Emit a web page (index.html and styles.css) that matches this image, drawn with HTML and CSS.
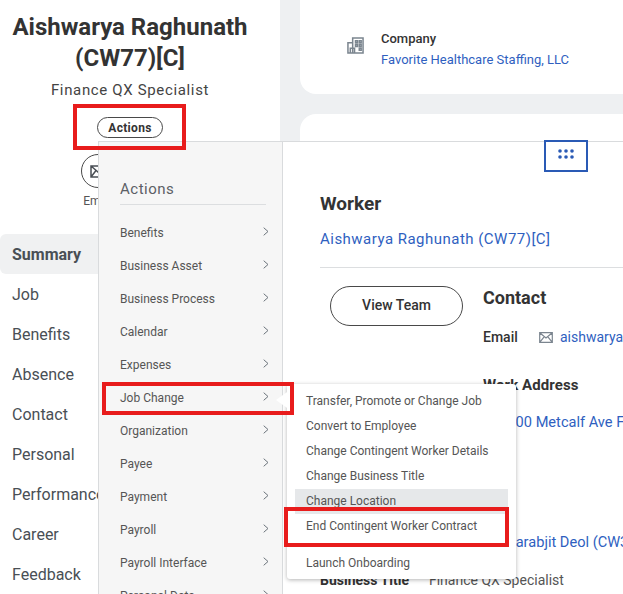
FILE: index.html
```html
<!DOCTYPE html>
<html lang="en">
<head>
    <meta charset="utf-8">
    <title>Worker profile</title>
    <link rel="stylesheet" href="styles.css">
</head>
<body>
    <svg class="sprites" width="0" height="0">
        <symbol id="chev" viewBox="0 0 6 9"><path d="M.7.700L5 4.500.7 8.300" fill="none" stroke="#6b737b" stroke-width="1"/></symbol>
    </svg>
    <div class="page">
        <!-- profile column -->
        <aside class="side">
            <h1 class="name">Aishwarya Raghunath (CW77)[C]</h1>
            <p class="role">Finance QX Specialist</p>
            <button class="btn-actions">Actions</button>
            <div class="quick">
                <span class="quick-icon">
                    <svg width="16" height="13" viewBox="0 0 16 13"><path d="M1 1h14v11H1zM1 1l7 6 7-6M1 12l5-6.500M15 12l-5-6.500" fill="none" stroke="#4a4f55" stroke-width="1.500"/></svg>
                </span>
                <span class="quick-label">Email</span>
            </div>
            <nav class="nav">
                <a class="nav-item nav-active">Summary</a>
                <a class="nav-item">Job</a>
                <a class="nav-item">Benefits</a>
                <a class="nav-item">Absence</a>
                <a class="nav-item">Contact</a>
                <a class="nav-item">Personal</a>
                <a class="nav-item">Performance</a>
                <a class="nav-item">Career</a>
                <a class="nav-item">Feedback</a>
            </nav>
        </aside>

        <main class="content">
            <section class="card card-top">
                <svg class="company-icon" width="17" height="17" viewBox="0 0 18 18"><path d="M6 1h11v16H1V6h5zM6 6v11M3.500 17v-5h4.500v5M9 4h2v2H9zM13 4h2v2h-2zM13 8h2v2h-2zM13 12h2v2h-2zM9 8h2v2H9z" fill="none" stroke="#7b858f" stroke-width="1.600"/></svg>
                <div>
                    <div class="company-label">Company</div>
                    <a class="link company-link">Favorite Healthcare Staffing, LLC</a>
                </div>
            </section>
            <section class="card card-bottom"></section>
        </main>
    </div>

    <!-- actions popup -->
    <div class="popup">
        <div class="menu">
            <div class="menu-title">Actions</div>
            <ul class="menu-list">
                <li>Benefits<svg class="chev"><use href="#chev"/></svg></li>
                <li>Business Asset<svg class="chev"><use href="#chev"/></svg></li>
                <li>Business Process<svg class="chev"><use href="#chev"/></svg></li>
                <li>Calendar<svg class="chev"><use href="#chev"/></svg></li>
                <li>Expenses<svg class="chev"><use href="#chev"/></svg></li>
                <li>Job Change<svg class="chev"><use href="#chev"/></svg></li>
                <li>Organization<svg class="chev"><use href="#chev"/></svg></li>
                <li>Payee<svg class="chev"><use href="#chev"/></svg></li>
                <li>Payment<svg class="chev"><use href="#chev"/></svg></li>
                <li>Payroll<svg class="chev"><use href="#chev"/></svg></li>
                <li>Payroll Interface<svg class="chev"><use href="#chev"/></svg></li>
                <li>Personal Data<svg class="chev"><use href="#chev"/></svg></li>
            </ul>
        </div>
        <div class="worker">
            <div class="grid-btn">
                <svg width="16" height="10" viewBox="0 0 16 10" fill="#2a5ab5">
                    <circle cx="2" cy="2" r="1.800"/><circle cx="8" cy="2" r="1.800"/><circle cx="14" cy="2" r="1.800"/>
                    <circle cx="2" cy="8" r="1.800"/><circle cx="8" cy="8" r="1.800"/><circle cx="14" cy="8" r="1.800"/>
                </svg>
            </div>
            <h2 class="worker-title">Worker</h2>
            <a class="link worker-link">Aishwarya Raghunath (CW77)[C]</a>
            <hr class="worker-line">
            <div class="worker-body">
                <button class="btn-team">View Team</button>
                <div class="contact">
                    <h3 class="contact-title">Contact</h3>
                    <div class="email-row">
                        <span class="email-label">Email</span>
                        <svg width="14" height="11" viewBox="0 0 14 11"><path d="M.700.700h12.600v9.600H.700zM.700.700L7 6l6.300-5.300M.700 10.300l4.600-5.600M13.300 10.300L8.700 4.700" fill="none" stroke="#7b858f" stroke-width="1.200"/></svg>
                        <a class="link">aishwarya</a>
                    </div>
                    <h3 class="address-title">Work Address</h3>
                    <a class="link address-link">11300 Metcalf Ave F</a>
                    <a class="link manager-link">Sarabjit Deol (CW3</a>
                </div>
            </div>
            <div class="business-row"><b>Business Title</b><span>Finance QX Specialist</span></div>
        </div>
    </div>

    <!-- job change submenu -->
    <div class="submenu">
        <ul class="submenu-list">
            <li>Transfer, Promote or Change Job</li>
            <li>Convert to Employee</li>
            <li>Change Contingent Worker Details</li>
            <li>Change Business Title</li>
            <li class="submenu-hover">Change Location</li>
            <li>End Contingent Worker Contract</li>
            <li class="submenu-last">Launch Onboarding</li>
        </ul>
    </div>
    <div class="caret"></div>

    <!-- annotations on the screenshot -->
    <div class="mark mark-actions"></div>
    <div class="mark mark-job"></div>
    <div class="mark mark-end"></div>
</body>
</html>
```

FILE: styles.css
```css
* {
    box-sizing: border-box;
}

html, body {
    margin: 0;
    height: 594px;
    overflow: hidden;
}

body {
    position: relative;
    font-family: Roboto, "Liberation Sans", sans-serif;
    color: #333;
    background: #eef0f2;
}

.sprites {
    position: absolute;
}

.page {
    display: flex;
    height: 594px;
}

.side {
    width: 280px;
    flex: none;
    background: #fff;
    display: flex;
    flex-direction: column;
    align-items: center;
    padding: 12px 20px 0 0;
}

.name {
    margin: 0;
    width: 260px;
    font-size: 24px;
    line-height: 31px;
    font-weight: 700;
    text-align: center;
    color: #333;
}

.role {
    margin: 6px 0 0;
    font-size: 15px;
    line-height: 20px;
    letter-spacing: 0.65px;
    color: #444;
}

.btn-actions {
    margin-top: 17px;
    width: 66px;
    height: 21px;
    padding: 0;
    border: 1px solid #494949;
    border-radius: 11px;
    background: #fff;
    font: 700 12px Roboto, sans-serif;
    letter-spacing: 0.3px;
    color: #333;
}

.quick {
    display: flex;
    flex-direction: column;
    align-items: center;
    align-self: flex-start;
    margin: 16px 0 0 81px;
}

.quick-icon {
    display: flex;
    align-items: center;
    justify-content: center;
    width: 34px;
    height: 34px;
    border: 1px solid #494949;
    border-radius: 50%;
}

.quick-label {
    margin-top: 6px;
    font-size: 12px;
    color: #555;
}

.nav {
    align-self: stretch;
    margin: 26px -20px 0 0;
}

.nav-item {
    display: flex;
    align-items: center;
    height: 40px;
    padding-left: 12px;
    font-size: 16px;
    color: #494f55;
}

.nav-active {
    font-weight: 700;
    background: #f0f1f2;
    border-radius: 6px 0 0 6px;
}

.content {
    flex: 1;
    display: flex;
    flex-direction: column;
    gap: 20px;
    margin-left: 20px;
}

.card {
    background: #fff;
}

.card-top {
    display: flex;
    align-items: flex-start;
    gap: 17px;
    height: 94px;
    padding: 31px 0 0 47px;
    border-radius: 0 0 0 16px;
}

.company-icon {
    margin-top: 6px;
}

.company-label {
    font-size: 13px;
    line-height: 16px;
    font-weight: 500;
}

.link {
    color: #2f5fbf;
}

.company-link {
    display: block;
    margin-top: 5px;
    font-size: 13px;
    line-height: 16px;
}

.card-bottom {
    flex: 1;
    border-radius: 16px 0 0 0;
}

.popup {
    position: absolute;
    left: 98px;
    top: 141px;
    right: 0;
    bottom: 0;
    display: flex;
    border-top: 1px solid #d9dbdd;
}

.menu {
    width: 185px;
    flex: none;
    background: #f6f6f6;
    border-left: 1px solid #d9dbdd;
    border-right: 1px solid #d9dbdd;
    padding: 37px 13px 0 21px;
    overflow: hidden;
}

.menu-title {
    height: 26px;
    font-size: 15px;
    line-height: 20px;
    letter-spacing: 0.5px;
    color: #5c6066;
    border-bottom: 1px solid #dcdee0;
    margin-right: 3px;
}

.menu-list {
    list-style: none;
    margin: 11px 0 0;
    padding: 0;
}

.menu-list li {
    display: flex;
    align-items: center;
    justify-content: space-between;
    height: 33px;
    font-size: 12px;
    color: #555;
}

.chev {
    width: 6px;
    height: 9px;
    margin-top: -3px;
}

.worker {
    position: relative;
    flex: 1;
    min-width: 0;
    background: #fff;
    padding: 50px 0 0 37px;
}

.grid-btn {
    position: absolute;
    left: 261px;
    top: -2px;
    width: 44px;
    height: 32px;
    display: flex;
    align-items: center;
    justify-content: center;
    padding-bottom: 4px;
    border: 2px solid #2a5ab5;
}

.worker-title {
    margin: 0;
    font-size: 19px;
    line-height: 24px;
    font-weight: 700;
    color: #333;
}

.worker-link {
    display: block;
    margin-top: 13px;
    font-size: 15px;
    line-height: 20px;
    letter-spacing: 0.48px;
}

.worker-line {
    margin: 18px 0 0;
    border: 0;
    border-top: 1px solid #dcdee0;
}

.worker-body {
    display: flex;
    gap: 20px;
    padding: 18px 0 0 10px;
}

.btn-team {
    flex: none;
    width: 133px;
    height: 40px;
    padding: 0 0 2px;
    background: #fff;
    border: 1px solid #494949;
    border-radius: 20px;
    font: 500 14px Roboto, sans-serif;
    color: #333;
}

.contact {
    min-width: 0;
    flex: 1;
    white-space: nowrap;
    overflow: hidden;
}

.contact-title {
    margin: 0;
    font-size: 18px;
    line-height: 24px;
    font-weight: 700;
}

.email-row {
    display: flex;
    align-items: center;
    height: 20px;
    margin-top: 17px;
    font-size: 14px;
}

.email-label {
    flex: none;
    width: 56px;
    font-weight: 500;
}

.email-row svg {
    flex: none;
    margin-right: 7px;
}

.address-title {
    margin: 28px 0 0;
    font-size: 15px;
    line-height: 20px;
    letter-spacing: 0.1px;
    font-weight: 700;
}

.address-link {
    display: block;
    margin: 17px 0 0 8px;
    font-size: 14.600px;
    line-height: 20px;
}

.manager-link {
    display: block;
    margin: 100px 0 0 24px;
    font-size: 14.600px;
    line-height: 20px;
}

.business-row {
    display: flex;
    gap: 20px;
    margin-top: 18px;
    font-size: 14px;
    line-height: 20px;
    color: #555;
}

.business-row b {
    color: #333;
}

.submenu {
    position: absolute;
    left: 287px;
    top: 384px;
    width: 229px;
    height: 195px;
    background: #fff;
    border-radius: 3px;
    box-shadow: 0 1px 4px rgba(0, 0, 0, 0.3);
    padding: 5px 8px 0;
}

.submenu-list {
    list-style: none;
    margin: 0;
    padding: 0;
}

.submenu-list li {
    height: 25px;
    line-height: 25px;
    padding-left: 11px;
    font-size: 12px;
    color: #555;
}

.submenu-hover {
    background: #e6e8ea;
}

.submenu-list .submenu-last {
    margin-top: 12px;
}

.caret {
    position: absolute;
    left: 276px;
    top: 390px;
    width: 14px;
    height: 20px;
    background: #fff;
    clip-path: polygon(0 50%, 100% 0, 100% 100%);
}

.mark {
    position: absolute;
    border: 4px solid #e81c1c;
}

.mark-actions {
    left: 73px;
    top: 104px;
    width: 113px;
    height: 46px;
}

.mark-job {
    left: 102px;
    top: 382px;
    width: 192px;
    height: 33px;
}

.mark-end {
    left: 284px;
    top: 507px;
    width: 225px;
    height: 40px;
}
```
